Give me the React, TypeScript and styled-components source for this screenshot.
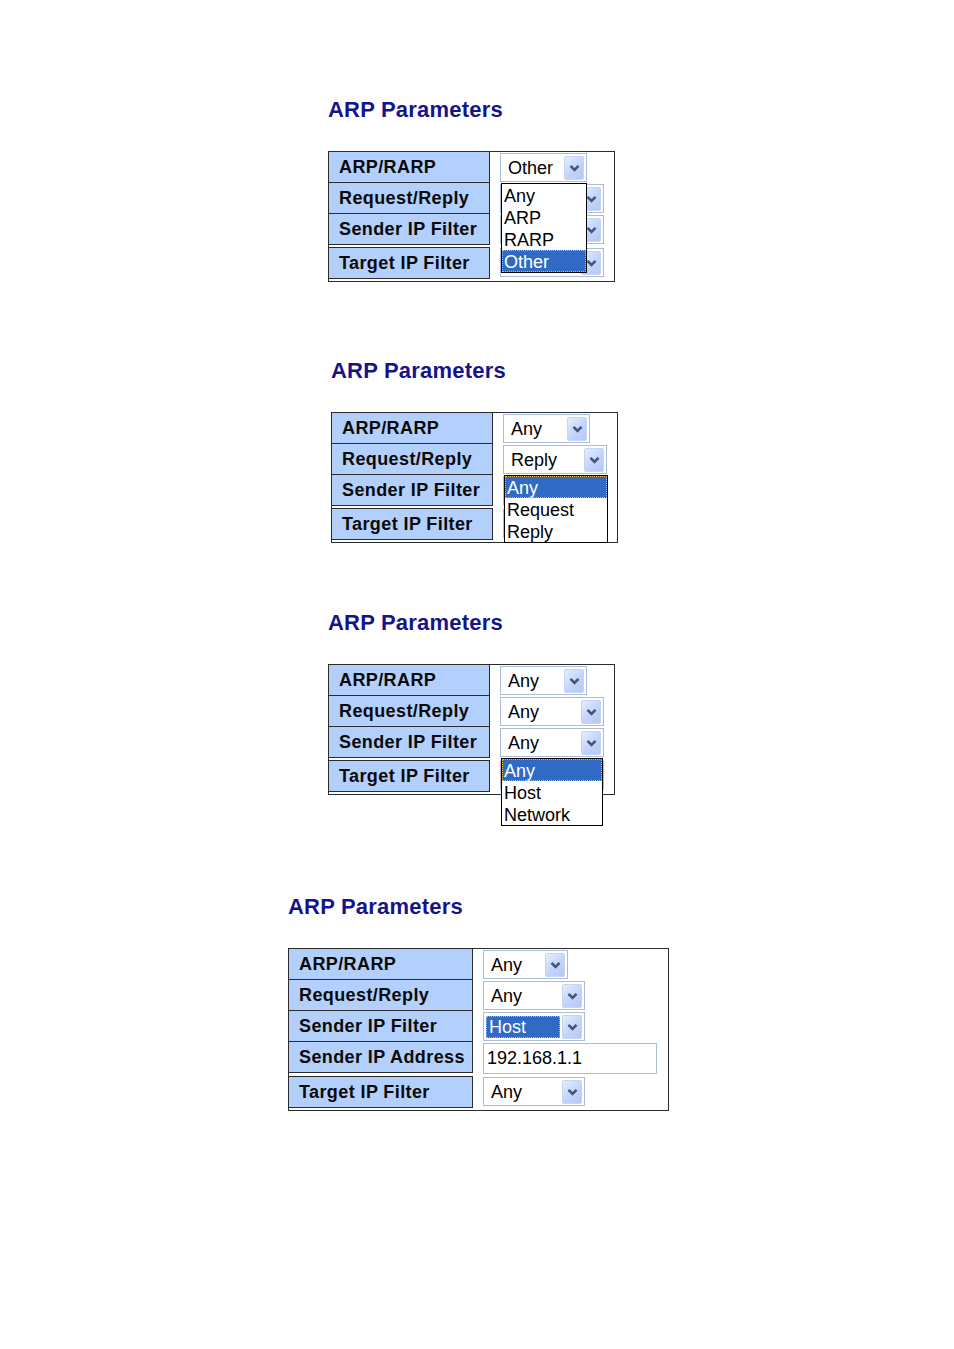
import React from 'react';
import styled, { createGlobalStyle } from 'styled-components';

type DropList = {
  options: string[],
  active: number,
  left: number,
  width: number,
};

type Control =
  | { kind: 'select', value: string, width: number, focus?: boolean, open?: DropList }
  | { kind: 'input', value: string, width: number };

type RowData = {
  label: string,
  control: Control,
  split?: boolean,
};

type PanelData = {
  left: number,
  top: number,
  labelWidth: number,
  width: number,
  rows: RowData[],
};

const GlobalStyle = createGlobalStyle`
  html, body {
    margin: 0;
    padding: 0;
    background: #ffffff;
  }
  body {
    font-family: "Liberation Sans", Arial, sans-serif;
    color: #000000;
  }
`;

const Page = styled.div`
  display: flex;
  flex-direction: column;
  align-items: flex-start;
  width: 954px;
  min-height: 1349px;
`;

const Panel = styled.section<{ $left: number, $top: number }>`
  display: flex;
  flex-direction: column;
  margin-left: ${(p) => p.$left}px;
  margin-top: ${(p) => p.$top}px;
`;

const Title = styled.h2`
  margin: 0 0 28px 0;
  font-family: "Liberation Sans", Arial, sans-serif;
  font-size: 22px;
  font-weight: bold;
  line-height: 26px;
  color: #15158a;
  letter-spacing: 0.2px;
`;

const Frame = styled.div<{ $width: number }>`
  box-sizing: border-box;
  width: ${(p) => p.$width}px;
  border: 1px solid #2b2b2b;
  padding-bottom: 2px;
  background: #ffffff;
`;

const Row = styled.div<{ $labelWidth: number, $split?: boolean }>`
  display: grid;
  grid-template-columns: ${(p) => p.$labelWidth}px 1fr;
  margin-top: ${(p) => (p.$split ? 2 : 0)}px;
`;

const LabelCell = styled.div<{ $split?: boolean }>`
  box-sizing: border-box;
  height: ${(p) => (p.$split ? 32 : 31)}px;
  display: flex;
  align-items: center;
  padding-left: 10px;
  background: #b3cffb;
  border-right: 1px solid #2b2b2b;
  border-bottom: 1px solid #2b2b2b;
  border-top: ${(p) => (p.$split ? '1px solid #2b2b2b' : 'none')};
  font-size: 18px;
  font-weight: bold;
  letter-spacing: 0.4px;
  color: #0a0a0a;
  white-space: nowrap;
`;

const ValueCell = styled.div`
  display: flex;
  align-items: flex-start;
  padding: 1px 0 0 10px;
`;

const SelectBox = styled.div<{ $width: number }>`
  position: relative;
  box-sizing: border-box;
  display: flex;
  align-items: center;
  width: ${(p) => p.$width}px;
  height: 29px;
  border: 1px solid #a9bdd9;
  background: #ffffff;
`;

const SelectValue = styled.div<{ $focus?: boolean }>`
  flex: 1;
  height: 22px;
  margin: 0 2px;
  padding-left: ${(p) => (p.$focus ? 3 : 5)}px;
  font-size: 18px;
  line-height: 22px;
  white-space: nowrap;
  background: ${(p) => (p.$focus ? '#316ac5' : 'transparent')};
  color: ${(p) => (p.$focus ? '#ffffff' : '#000000')};
  outline: ${(p) => (p.$focus ? '1px dotted #e2b64a' : 'none')};
  outline-offset: -1px;
`;

const ArrowButton = styled.div`
  box-sizing: border-box;
  display: flex;
  align-items: center;
  justify-content: center;
  width: 20px;
  height: 24px;
  margin-right: 2px;
  border: 1px solid #c6d5f5;
  border-radius: 2px;
  background: linear-gradient(135deg, #e6eefe 0%, #c3d4fa 55%, #b3c8f6 100%);
`;

const DropMenu = styled.ul<{ $left: number, $width: number }>`
  position: absolute;
  top: calc(100% + 2px);
  left: ${(p) => p.$left - 1}px;
  z-index: 5;
  box-sizing: border-box;
  width: ${(p) => p.$width}px;
  margin: 0;
  padding: 0;
  list-style: none;
  border: 1px solid #000000;
  background: #ffffff;
`;

const DropItem = styled.li<{ $active?: boolean }>`
  box-sizing: border-box;
  height: 22px;
  padding: 1px 0 0 2px;
  font-size: 18px;
  line-height: 22px;
  white-space: nowrap;
  background: ${(p) => (p.$active ? '#316ac5' : 'transparent')};
  color: ${(p) => (p.$active ? '#ffffff' : '#000000')};
  outline: ${(p) => (p.$active ? '1px dotted #e2b64a' : 'none')};
  outline-offset: -1px;
`;

const TextField = styled.input<{ $width: number }>`
  box-sizing: border-box;
  width: ${(p) => p.$width}px;
  height: 31px;
  margin: 0;
  padding: 0 0 0 3px;
  border: 1px solid #a9bdd9;
  outline: none;
  background: #ffffff;
  font-family: "Liberation Sans", Arial, sans-serif;
  font-size: 18px;
  color: #000000;
`;

function Chevron() {
  return (
    <svg width="11" height="8" viewBox="0 0 11 8">
      <path d="M1.5 1.8 L5.5 5.8 L9.5 1.8" fill="none" stroke="#43557c" strokeWidth="2.6" />
    </svg>
  );
}

function Select({ control }: { control: Extract<Control, { kind: 'select' }> }) {
  const { open } = control;
  return (
    <SelectBox $width={control.width}>
      <SelectValue $focus={control.focus}>{control.value}</SelectValue>
      <ArrowButton>
        <Chevron />
      </ArrowButton>
      {open && (
        <DropMenu $left={open.left} $width={open.width}>
          {open.options.map((o, i) => (
            <DropItem key={o} $active={i === open.active}>{o}</DropItem>
          ))}
        </DropMenu>
      )}
    </SelectBox>
  );
}

// selects lying under an open list show no text of their own
const panels: PanelData[] = [
  {
    left: 328,
    top: 97,
    labelWidth: 161,
    width: 287,
    rows: [
      {
        label: 'ARP/RARP',
        control: {
          kind: 'select', value: 'Other', width: 87,
          open: { options: ['Any', 'ARP', 'RARP', 'Other'], active: 3, left: 1, width: 86 },
        },
      },
      { label: 'Request/Reply', control: { kind: 'select', value: '', width: 104 } },
      { label: 'Sender IP Filter', control: { kind: 'select', value: '', width: 104 } },
      { label: 'Target IP Filter', control: { kind: 'select', value: '', width: 104 }, split: true },
    ],
  },
  {
    left: 331,
    top: 76,
    labelWidth: 161,
    width: 287,
    rows: [
      { label: 'ARP/RARP', control: { kind: 'select', value: 'Any', width: 87 } },
      {
        label: 'Request/Reply',
        control: {
          kind: 'select', value: 'Reply', width: 104,
          open: { options: ['Any', 'Request', 'Reply'], active: 0, left: 1, width: 104 },
        },
      },
      { label: 'Sender IP Filter', control: { kind: 'select', value: '', width: 104 } },
      { label: 'Target IP Filter', control: { kind: 'select', value: '', width: 104 }, split: true },
    ],
  },
  {
    left: 328,
    top: 67,
    labelWidth: 161,
    width: 287,
    rows: [
      { label: 'ARP/RARP', control: { kind: 'select', value: 'Any', width: 87 } },
      { label: 'Request/Reply', control: { kind: 'select', value: 'Any', width: 104 } },
      {
        label: 'Sender IP Filter',
        control: {
          kind: 'select', value: 'Any', width: 104,
          open: { options: ['Any', 'Host', 'Network'], active: 0, left: 1, width: 102 },
        },
      },
      { label: 'Target IP Filter', control: { kind: 'select', value: '', width: 104 }, split: true },
    ],
  },
  {
    left: 288,
    top: 99,
    labelWidth: 184,
    width: 381,
    rows: [
      { label: 'ARP/RARP', control: { kind: 'select', value: 'Any', width: 85 } },
      { label: 'Request/Reply', control: { kind: 'select', value: 'Any', width: 102 } },
      { label: 'Sender IP Filter', control: { kind: 'select', value: 'Host', width: 102, focus: true } },
      { label: 'Sender IP Address', control: { kind: 'input', value: '192.168.1.1', width: 174 } },
      { label: 'Target IP Filter', control: { kind: 'select', value: 'Any', width: 102 }, split: true },
    ],
  },
];

function ParamPanel({ panel }: { panel: PanelData }) {
  return (
    <Panel $left={panel.left} $top={panel.top}>
      <Title>ARP Parameters</Title>
      <Frame $width={panel.width}>
        {panel.rows.map((r) => (
          <Row key={r.label} $labelWidth={panel.labelWidth} $split={r.split}>
            <LabelCell $split={r.split}>{r.label}</LabelCell>
            <ValueCell>
              {r.control.kind === 'select'
                ? <Select control={r.control} />
                : <TextField $width={r.control.width} value={r.control.value} readOnly />}
            </ValueCell>
          </Row>
        ))}
      </Frame>
    </Panel>
  );
}

function App() {
  return (
    <Page>
      <GlobalStyle />
      {panels.map((p, i) => (
        <ParamPanel key={i} panel={p} />
      ))}
    </Page>
  );
}

export default App;
